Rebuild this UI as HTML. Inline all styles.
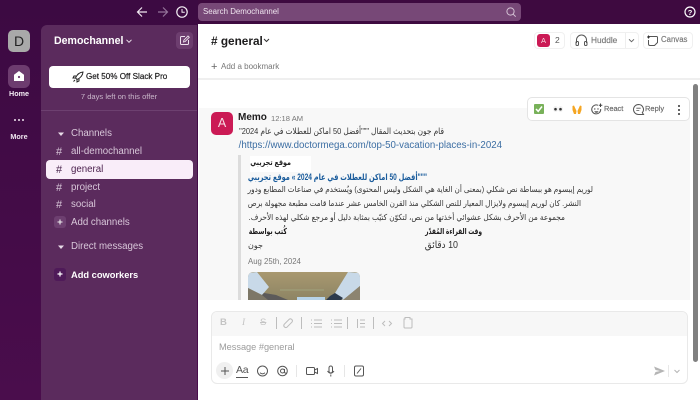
<!DOCTYPE html>
<html><head><meta charset="utf-8">
<style>
*{box-sizing:border-box}
html,body{margin:0;padding:0}
body{width:700px;height:400px;overflow:hidden;position:relative;background:#3f0e40;font-family:"Liberation Sans","DejaVu Sans",sans-serif}
.a{position:absolute;white-space:nowrap}
svg{position:absolute;overflow:visible}
#w{position:absolute;left:0;top:0;width:700px;height:400px;overflow:hidden;filter:blur(.3px)}
.side{color:#d9c8da;font-size:9.700px;line-height:14px}
.ar{direction:rtl;font-family:"Liberation Sans","DejaVu Sans",sans-serif;color:#333;font-size:8.600px;line-height:14px;text-align:right;transform-origin:100% 50%}
.gray{fill:none;stroke:#bdbdbd;stroke-width:1}
</style></head><body><div id="w">
<div class="a" style="left:0;top:0;width:700px;height:400px;background:linear-gradient(180deg,#3c0a42,#4a0d4c)"></div>
<div class="a" style="left:198px;top:0;width:502px;height:24px;background:#3e0a40"></div>

<!-- top nav -->
<svg style="left:0;top:0" width="200" height="24" viewBox="0 0 200 24">
<path d="M147 12h-9M142 7.500l-4.500 4.500 4.500 4.500" fill="none" stroke="#f0e8f0" stroke-width="1.200"/>
<path d="M158 12h9M163 7.500l4.500 4.500-4.500 4.500" fill="none" stroke="#94749a" stroke-width="1.200"/>
<circle cx="182" cy="12" r="5.200" fill="none" stroke="#f4eef4" stroke-width="1.200"/>
<path d="M182 9v3.300h2.800" fill="none" stroke="#f4eef4" stroke-width="1"/>
</svg>
<div class="a" style="left:198px;top:3px;width:323px;height:18px;border-radius:4px;background:#774877"></div>
<div class="a" style="left:203px;top:5px;font-size:7.900px;line-height:14px;color:#f0e6f0">Search Demochannel</div>
<svg style="left:504px;top:5px" width="14" height="14" viewBox="0 0 14 14"><circle cx="6.500" cy="6.500" r="3.600" fill="none" stroke="#d5c3d5"/><path d="M9.200 9.200l2.500 2.500" stroke="#d5c3d5"/></svg>
<svg style="left:683px;top:5px" width="14" height="14" viewBox="0 0 14 14"><circle cx="7" cy="7" r="5" fill="none" stroke="#fff" stroke-width="1.200"/><text x="7" y="9.800" font-size="7.500" font-weight="700" fill="#fff" text-anchor="middle" font-family="Liberation Sans">?</text></svg>

<!-- rail -->
<div class="a" style="left:8px;top:30px;width:22px;height:22px;border-radius:5px;background:#a9a9a9;color:#222;font-size:14px;line-height:22px;text-align:center">D</div>
<div class="a" style="left:8px;top:65px;width:22px;height:23px;border-radius:6px;background:#6d3c6f"></div>
<svg style="left:13px;top:70px" width="12" height="12" viewBox="0 0 12 12"><path d="M6 1l5 3.800V11H1V4.800z" fill="#fff"/><circle cx="6" cy="7" r="1.100" fill="#6d3c6f"/></svg>
<div class="a" style="left:0;top:88px;width:38px;text-align:center;font-size:7.200px;line-height:12px;font-weight:700;color:#f5eef5">Home</div>
<div class="a" style="left:14px;top:119px;width:2.200px;height:2.200px;border-radius:50%;background:#f0e6f0;box-shadow:4px 0 #f0e6f0,8px 0 #f0e6f0"></div>
<div class="a" style="left:0;top:131px;width:38px;text-align:center;font-size:7.200px;line-height:12px;font-weight:700;color:#f0e6f0">More</div>

<!-- sidebar -->
<div class="a" style="left:41px;top:25px;width:156px;height:375px;background:#5b2b5d;border-top-left-radius:6px"></div>
<div class="a" style="left:54px;top:33px;font-size:10.600px;line-height:16px;font-weight:700;color:#fff">Demochannel</div>
<svg style="left:125px;top:37px" width="8" height="8" viewBox="0 0 8 8"><path d="M1.500 2.800L4 5.300l2.500-2.500" fill="none" stroke="#eadfea" stroke-width="1"/></svg>
<div class="a" style="left:176px;top:32px;width:17px;height:17px;border-radius:4px;background:#6d3e6f"></div>
<svg style="left:178px;top:34px" width="13" height="13" viewBox="0 0 13 13"><path d="M7 2.500H3.500a1 1 0 0 0-1 1v6a1 1 0 0 0 1 1h6a1 1 0 0 0 1-1V6" fill="none" stroke="#eee2ee"/><path d="M5.500 8l.4-1.800L10 2l1.300 1.300L7.200 7.500z" fill="none" stroke="#eee2ee" stroke-width=".9"/></svg>
<div class="a" style="left:49px;top:66px;width:141px;height:22px;border-radius:4px;background:#fff"></div>
<svg style="left:72px;top:71px" width="12" height="12" viewBox="0 0 12 12"><path d="M11 1C7.500 1.300 5 3.500 3.500 7l1.500 1.500C8.500 7 10.700 4.500 11 1zM4 5H2L1 7h2M7 8v2L5 11V9M3 9l-1.500 1.500" fill="none" stroke="#222" stroke-width="1"/></svg>
<div class="a" style="left:86px;top:70px;font-size:8.100px;line-height:14px;font-weight:400;color:#1d1c1d;-webkit-text-stroke:.2px #1d1c1d">Get 50% Off Slack Pro</div>
<div class="a" style="left:41px;top:90px;width:156px;text-align:center;font-size:7.600px;line-height:14px;color:#c9b6ca">7 days left on this offer</div>
<div class="a" style="left:41px;top:110px;width:156px;height:1px;background:#6d4070"></div>

<svg style="left:56px;top:129px" width="10" height="10" viewBox="0 0 10 10"><path d="M2 3.500h6L5 7z" fill="#e8dce8"/></svg>
<div class="a side" style="left:71px;top:127px">Channels</div>
<div class="a side" style="left:56px;top:145px;font-size:11px">#</div>
<div class="a side" style="left:71px;top:145px">all-demochannel</div>
<div class="a" style="left:46px;top:160px;width:147px;height:19px;border-radius:4px;background:#f9edf9"></div>
<div class="a side" style="left:56px;top:163px;font-size:11px;color:#46224a">#</div>
<div class="a side" style="left:71px;top:163px;color:#4a1f4c">general</div>
<div class="a side" style="left:56px;top:181px;font-size:11px">#</div>
<div class="a side" style="left:71px;top:181px">project</div>
<div class="a side" style="left:56px;top:198px;font-size:11px">#</div>
<div class="a side" style="left:71px;top:198px">social</div>
<div class="a" style="left:54px;top:216px;width:12px;height:12px;border-radius:3px;background:#6d3f70"></div>
<svg style="left:56px;top:218px" width="8" height="8" viewBox="0 0 8 8"><path d="M4 1.500v5M1.500 4h5" stroke="#eee" stroke-width="1.100"/></svg>
<div class="a side" style="left:71px;top:216px">Add channels</div>
<svg style="left:56px;top:242px" width="10" height="10" viewBox="0 0 10 10"><path d="M2 3.500h6L5 7z" fill="#e8dce8"/></svg>
<div class="a side" style="left:71px;top:240px">Direct messages</div>
<div class="a" style="left:54px;top:268px;width:12px;height:13px;border-radius:3px;background:#4f1a59"></div>
<svg style="left:56px;top:270px" width="8" height="8" viewBox="0 0 8 8"><path d="M4 1.500v5M1.500 4h5" stroke="#fff" stroke-width="1.200"/></svg>
<div class="a" style="left:71px;top:268px;font-size:9.300px;line-height:14px;font-weight:700;color:#fff">Add coworkers</div>

<!-- main -->
<div class="a" style="left:198px;top:24px;width:502px;height:376px;background:#fff"></div>
<div class="a" style="left:211px;top:32px;font-size:11.800px;line-height:18px;font-weight:700;color:#1d1c1d"># general</div>
<svg style="left:262px;top:36px" width="9" height="9" viewBox="0 0 9 9"><path d="M2 3l2.500 2.500L7 3" fill="none" stroke="#333" stroke-width="1"/></svg>
<div class="a" style="left:211px;top:60px;font-size:11px;line-height:14px;color:#666">+</div>
<div class="a" style="left:221px;top:60px;font-size:8px;line-height:14px;color:#777">Add a bookmark</div>
<div class="a" style="left:198px;top:78px;width:502px;height:2px;background:#efefef"></div>

<!-- header buttons -->
<div class="a" style="left:534px;top:32px;width:31px;height:17px;border:1px solid #f0f0f0;border-radius:4px"></div>
<div class="a" style="left:537px;top:34px;width:13px;height:13px;border-radius:3px;background:#cb1a55;color:#f7d5df;font-size:7.500px;line-height:13px;text-align:center">A</div>
<div class="a" style="left:555px;top:34px;font-size:8.500px;line-height:13px;color:#555">2</div>
<div class="a" style="left:570px;top:32px;width:69px;height:17px;border:1px solid #f0f0f0;border-radius:4px"></div>
<svg style="left:575px;top:34px" width="13" height="13" viewBox="0 0 13 13"><path d="M1.500 9V6a5 5 0 0 1 10 0v3" fill="none" stroke="#555"/><rect x="1" y="7.500" width="2.500" height="4" rx="1" fill="none" stroke="#555"/><rect x="9.500" y="7.500" width="2.500" height="4" rx="1" fill="none" stroke="#555"/></svg>
<div class="a" style="left:591px;top:33px;font-size:8.300px;line-height:14px;color:#777;-webkit-text-stroke:.15px #777">Huddle</div>
<div class="a" style="left:625px;top:33px;width:1px;height:15px;background:#eee"></div>
<svg style="left:627px;top:36px" width="9" height="9" viewBox="0 0 9 9"><path d="M2 3.300l2.500 2.400L7 3.300" fill="none" stroke="#666"/></svg>
<div class="a" style="left:643px;top:32px;width:50px;height:17px;border:1px solid #f0f0f0;border-radius:4px"></div>
<svg style="left:646px;top:34px" width="13" height="13" viewBox="0 0 13 13"><path d="M3 2.500h7.500a1 1 0 0 1 1 1v5l-3 3H4a1.500 1.500 0 0 1-1.500-1.500V6" fill="none" stroke="#555"/><path d="M1 3h3M2.500 1.500v3" stroke="#333"/></svg>
<div class="a" style="left:661px;top:33px;font-size:7.800px;line-height:14px;color:#777;-webkit-text-stroke:.15px #777">Canvas</div>

<!-- message -->
<div class="a" style="left:199px;top:108px;width:491px;height:192px;background:#f8f8f8"></div>
<div class="a" style="left:211px;top:112px;width:22px;height:23px;border-radius:5px;background:#cb1a55;color:#f8dde5;font-size:12.500px;line-height:23px;text-align:center">A</div>
<div class="a" style="left:238px;top:111px;font-size:10px;line-height:14px;font-weight:700;color:#1d1c1d">Memo</div>
<div class="a" style="left:271px;top:112px;font-size:7.600px;line-height:14px;color:#777">12:18 AM</div>
<div class="a ar" style="left:200px;top:124px;width:244px;transform:scaleX(.865)">قام جون بتحديث المقال """أفضل 50 اماكن للعطلات في عام 2024"</div>
<div class="a" dir="rtl" style="left:200px;top:139px;width:302px;text-align:right;font-size:9.700px;line-height:14px;color:#3c6ea3">https://www.doctormega.com/top-50-vacation-places-in-2024/</div>

<div class="a" style="left:238px;top:155px;width:3px;height:145px;background:#dcdcdc"></div>
<div class="a" style="left:250px;top:156px;width:61px;height:16px;background:#fff"></div>
<div class="a ar" style="left:250px;top:156px;width:41px;font-weight:700;color:#222;font-size:8px;transform:scaleX(.8)">موقع تجريبي</div>
<div class="a ar" style="left:220px;top:170px;width:207px;font-weight:700;color:#1a5c9c;font-size:8.800px;transform:scaleX(.75)">"""أفضل 50 اماكن للعطلات في عام 2024 » موقع تجريبي</div>
<div class="a ar" style="left:240px;top:183px;width:353px;font-size:8.200px;transform:scaleX(.885)">لوريم إيبسوم هو ببساطة نص شكلي (بمعنى أن الغاية هي الشكل وليس المحتوى) ويُستخدم في صناعات المطابع ودور</div>
<div class="a ar" style="left:240px;top:197px;width:341px;font-size:8.200px;transform:scaleX(.883)">النشر. كان لوريم إيبسوم ولايزال المعيار للنص الشكلي منذ القرن الخامس عشر عندما قامت مطبعة مجهولة برص</div>
<div class="a ar" style="left:240px;top:211px;width:325px;font-size:8.200px;transform:scaleX(.9)">مجموعة من الأحرف بشكل عشوائي أخذتها من نص، لتكوّن كتيّب بمثابة دليل أو مرجع شكلي لهذه الأحرف.</div>
<div class="a ar" style="left:240px;top:225px;width:47px;font-weight:700;color:#1d1c1d;font-size:8.200px;transform:scaleX(.75)">كُتب بواسطة</div>
<div class="a ar" style="left:400px;top:225px;width:82px;font-weight:700;color:#1d1c1d;font-size:8.200px;transform:scaleX(.72)">وقت القراءة المُقدّر</div>
<div class="a ar" style="left:240px;top:239px;width:23px;font-size:8px">جون</div>
<div class="a ar" style="left:400px;top:239px;width:58px;font-size:10px;transform:scaleX(.89)">10 دقائق</div>
<div class="a" style="left:248px;top:255px;font-size:7.800px;line-height:14px;color:#777">Aug 25th, 2024</div>

<div class="a" style="left:248px;top:272px;width:112px;height:28px;border-radius:5px 5px 0 0;overflow:hidden;background:linear-gradient(180deg,#a8986f,#8d8464)">
<svg width="112" height="28" viewBox="0 0 112 28" style="left:0;top:0">
<path d="M0 1L9 0 21 15 14 23 0 16z" fill="#c8d9e8"/>
<path d="M112 1L100 0 87 21 95 28 112 14z" fill="#c8d9e8"/>
<path d="M0 16l14 7 2-2 12 2 10 5H0z" fill="#7d7767"/>
<path d="M14 23l2-2 12 2 12 5H20z" fill="#5c5a5a"/>
<path d="M112 14l-17 14h17z" fill="#8c8470"/>
<path d="M82 24l5-3 8 5-2 2H78z" fill="#2c3a4c"/>
<rect x="49" y="25" width="28" height="3" fill="#b7d3e8"/>
<path d="M32 18h44" stroke="#a8b38e" stroke-width="1" opacity=".6"/>
</svg></div>

<!-- hover actions -->
<div class="a" style="left:527px;top:97px;width:163px;height:24px;border:1px solid #e4e4e4;border-radius:5px;background:#fff"></div>
<div class="a" style="left:534px;top:104px;width:10px;height:10px;border-radius:1px;background:#78b159"></div>
<svg style="left:534px;top:104px" width="10" height="10" viewBox="0 0 10 10"><path d="M2 5l2.200 2.300L8 2.500" fill="none" stroke="#fff" stroke-width="1.500"/></svg>
<svg style="left:552px;top:103px" width="12" height="12" viewBox="0 0 12 12"><ellipse cx="3.500" cy="6" rx="2.500" ry="3" fill="#f2f2f2"/><ellipse cx="8.500" cy="6" rx="2.500" ry="3" fill="#f2f2f2"/><circle cx="3.500" cy="6.200" r="1.300" fill="#333"/><circle cx="8.500" cy="6.200" r="1.300" fill="#333"/></svg>
<svg style="left:571px;top:103px" width="12" height="12" viewBox="0 0 12 12"><path d="M1.500 3l1.500-.5L5.500 8 5 11H3L1.500 7zM10.500 3L9 2.500 6.500 8 7 11h2l1.500-4z" fill="#f5a623"/></svg>
<svg style="left:590px;top:103px" width="13" height="13" viewBox="0 0 13 13"><path d="M8 2.300A4.500 4.500 0 1 0 10.700 6" fill="none" stroke="#555"/><circle cx="4.800" cy="6" r=".7" fill="#555"/><circle cx="8" cy="6" r=".7" fill="#555"/><path d="M4.300 8.200h4.200a2.200 2.200 0 0 1-4.200 0z" fill="#555"/><path d="M10.500 .5v3.500M8.800 2.200h3.500" stroke="#444"/></svg>
<div class="a" style="left:604px;top:102px;font-size:7.400px;line-height:14px;color:#666;-webkit-text-stroke:.15px #666">React</div>
<svg style="left:632px;top:103px" width="13" height="13" viewBox="0 0 13 13"><path d="M6.500 1.500a5 5 0 0 0 0 10h5l-1.200-1.800a5 5 0 0 0-3.800-8.200z" fill="none" stroke="#555"/><path d="M4.300 5.200h4.400M4.300 7.500h3" stroke="#555" stroke-width=".8"/></svg>
<div class="a" style="left:645px;top:102px;font-size:7.500px;line-height:14px;color:#666;-webkit-text-stroke:.15px #666">Reply</div>
<div class="a" style="left:677.500px;top:105px;width:2px;height:2px;border-radius:50%;background:#333;box-shadow:0 4px #333,0 8px #333"></div>

<!-- scrollbar -->
<div class="a" style="left:693px;top:84px;width:5px;height:278px;border-radius:3px;background:#808080"></div>

<!-- composer -->
<div class="a" style="left:211px;top:311px;width:477px;height:73px;border:1px solid #e9e9e9;border-radius:6px;background:#fff;overflow:hidden"><div style="height:24px;background:#f7f7f7"></div></div>
<div class="a" style="left:220px;top:316px;font-size:9.500px;line-height:14px;font-weight:700;color:#c4c4c4">B</div>
<div class="a" style="left:242px;top:316px;font-size:9.500px;line-height:14px;font-style:italic;color:#c4c4c4;font-family:'Liberation Serif',serif">I</div>
<div class="a" style="left:260px;top:316px;font-size:9.500px;line-height:14px;color:#c4c4c4;text-decoration:line-through">S</div>
<svg style="left:0;top:0" width="700" height="400" viewBox="0 0 700 400">
<g class="gray">
<path d="M276.500 317v12M301.500 317v12M347.500 317v12M373.500 317v12"/>
<path d="M285 325.500l-.8.800a2 2 0 0 0 2.800 2.800l5-5a2 2 0 0 0-2.800-2.800l-4.200 4.200" transform="translate(0,-2)"/>
<path d="M314 320h8M314 323.500h8M314 327h8M311 320h1M311 323.500h1M311 327h1"/>
<path d="M334 320h8M334 323.500h8M334 327h8M331 320h1M331 323.500h1M331 327h1"/>
<path d="M357.500 319v9M360 320h5M360 323.500h5M360 327h5"/>
<path d="M385 321l-2.500 2.500 2.500 2.500M389 321l2.500 2.500-2.500 2.500"/>
<path d="M404 319h1v-1.500h5V319h2v8a1 1 0 0 1-1 1h-6a1 1 0 0 1-1-1z"/>
</g></svg>
<div class="a" style="left:219px;top:340px;font-size:9.200px;line-height:14px;color:#9c9c9c">Message #general</div>
<div class="a" style="left:216px;top:362px;width:17px;height:17px;border-radius:50%;background:#f0f0f0"></div>
<svg style="left:219.500px;top:365.500px" width="10" height="10" viewBox="0 0 10 10"><path d="M5 1v8M1 5h8" stroke="#555" stroke-width="1"/></svg>
<div class="a" style="left:236px;top:364px;font-size:10.500px;line-height:13px;color:#555;border-bottom:1px solid #555;letter-spacing:-.2px">Aa</div>
<svg style="left:0;top:0" width="700" height="400" viewBox="0 0 700 400">
<g fill="none" stroke="#555" stroke-width="1">
<circle cx="262.500" cy="371" r="5"/>
<path d="M260 372.800q2.500 2.200 5 0"/>
<circle cx="282.500" cy="371" r="4.800"/><circle cx="282.500" cy="371" r="2"/><path d="M284.500 369v3q0 1.500 2.500 1"/>
<rect x="306.500" y="367.500" width="8" height="7" rx="1"/><path d="M314.500 370l3-1.500v5l-3-1.500"/>
<rect x="329" y="366" width="3.500" height="7" rx="1.700"/><path d="M327.500 371q3.200 4.500 6.500 0M330.800 374.500v2"/>
<rect x="354.500" y="366" width="9" height="10" rx="1.500" /><path d="M357 373.500l4-5"/>
</g>
<path d="M296.500 365v12M344.500 365v12" stroke="#e6e6e6"/>
<path d="M654 366.500l11 4.500-11 4.500 1.500-3.500 4.500-1-4.500-1z" fill="#b5b5b5"/>
<path d="M668.500 365v12" stroke="#e8e8e8"/>
<path d="M674.500 370l2.500 2.500 2.500-2.500" fill="none" stroke="#b5b5b5"/>
</svg>
</div></body></html>
